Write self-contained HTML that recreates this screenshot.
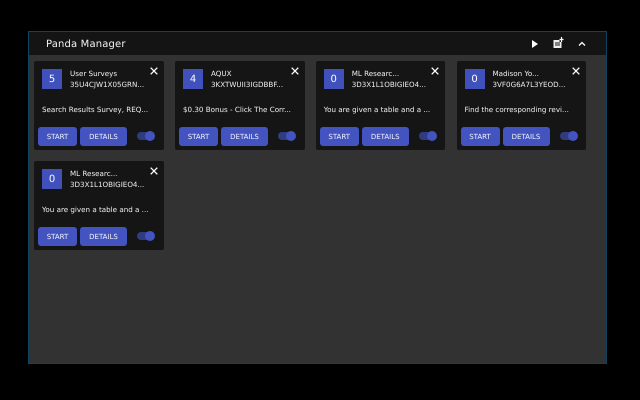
<!DOCTYPE html>
<html><head><meta charset="utf-8"><style>
*{box-sizing:border-box;margin:0;padding:0}
html,body{width:640px;height:400px;background:#000;overflow:hidden;font-family:"DejaVu Sans",sans-serif;color:#e8e8e8;text-rendering:geometricPrecision}
.win{position:absolute;left:28px;top:31px;width:579px;height:333px;background:#323232;border:1px solid #0e4460}
.hd{position:absolute;left:0;top:0;width:577px;height:23px;background:#141414}
.ttl{position:absolute;left:17px;top:5.5px;font-size:10px;line-height:13px;color:#f2f2f2;letter-spacing:.16px;white-space:nowrap}
.card{position:absolute;width:129.6px;height:89px;background:#151515;border-radius:2px}
.n{position:absolute;left:8px;top:8px;width:20px;height:20px;background:#4051bb;color:#fff;font-size:10px;line-height:21px;text-align:center}
.t{position:absolute;left:36px;font-size:7.15px;line-height:10px;white-space:nowrap;color:#eee}
.a{top:8px}.b{top:18.5px}
.d{position:absolute;left:8px;top:44px;font-size:7.15px;line-height:10px;white-space:nowrap;color:#eee}
.x{position:absolute;left:115.6px;top:6px;width:8px;height:8px}
.btn{position:absolute;top:66px;height:19px;background:#4354c0;border-radius:3px;color:#eef0fa;font-size:7px;line-height:20px;text-align:center;white-space:nowrap}
.s{left:4px;width:39px}.dt{left:46px;width:47px}
.tr{position:absolute;left:103px;top:71px;width:15px;height:8px;border-radius:4px;background:#2f3c80}
.th{position:absolute;left:111px;top:70px;width:10px;height:10px;border-radius:50%;background:#4354c0}
</style></head><body>
<div class="win"><div class="hd"></div><div class="ttl">Panda Manager</div>
<svg style="position:absolute;left:500px;top:5px" width="60" height="14" viewBox="0 0 60 14">
<path d="M3 3l6 4-6 4z" fill="#fff"/>
<path d="M24.5 3h6v2h2v6h-8z" fill="#eee"/><path d="M26 6h5M26 8h5" stroke="#141414" stroke-width="1"/><path d="M32.5 0v5M30.5 2.5h4" stroke="#fff" stroke-width="1.2"/>
<path d="M50 8.5l3-3 3 3" fill="none" stroke="#fff" stroke-width="1.3"/>
</svg></div>

<div class="card" style="left:34px;top:61px"><div class="n">5</div><div class="t a">User Surveys</div><div class="t b">35U4CJW1X05GRN...</div><svg class="x" viewBox="0 0 8 8"><path d="M.7.7l6.6 6.6M7.3.7L.7 7.3" stroke="#fff" stroke-width="1.3"/></svg><div class="d">Search Results Survey, REQ...</div><div class="btn s">START</div><div class="btn dt">DETAILS</div><div class="tr"></div><div class="th"></div></div>

<div class="card" style="left:175px;top:61px"><div class="n">4</div><div class="t a">AQUX</div><div class="t b">3KXTWUII3IGDBBF...</div><svg class="x" viewBox="0 0 8 8"><path d="M.7.7l6.6 6.6M7.3.7L.7 7.3" stroke="#fff" stroke-width="1.3"/></svg><div class="d">$0.30 Bonus - Click The Corr...</div><div class="btn s">START</div><div class="btn dt">DETAILS</div><div class="tr"></div><div class="th"></div></div>

<div class="card" style="left:315.7px;top:61px"><div class="n">0</div><div class="t a">ML Researc...</div><div class="t b">3D3X1L1OBIGIEO4...</div><svg class="x" viewBox="0 0 8 8"><path d="M.7.7l6.6 6.6M7.3.7L.7 7.3" stroke="#fff" stroke-width="1.3"/></svg><div class="d">You are given a table and a ...</div><div class="btn s">START</div><div class="btn dt">DETAILS</div><div class="tr"></div><div class="th"></div></div>

<div class="card" style="left:456.5px;top:61px"><div class="n">0</div><div class="t a">Madison Yo...</div><div class="t b">3VF0G6A7L3YEOD...</div><svg class="x" viewBox="0 0 8 8"><path d="M.7.7l6.6 6.6M7.3.7L.7 7.3" stroke="#fff" stroke-width="1.3"/></svg><div class="d">Find the corresponding revi...</div><div class="btn s">START</div><div class="btn dt">DETAILS</div><div class="tr"></div><div class="th"></div></div>

<div class="card" style="left:34px;top:161px"><div class="n">0</div><div class="t a">ML Researc...</div><div class="t b">3D3X1L1OBIGIEO4...</div><svg class="x" viewBox="0 0 8 8"><path d="M.7.7l6.6 6.6M7.3.7L.7 7.3" stroke="#fff" stroke-width="1.3"/></svg><div class="d">You are given a table and a ...</div><div class="btn s">START</div><div class="btn dt">DETAILS</div><div class="tr"></div><div class="th"></div></div>
</body></html>
